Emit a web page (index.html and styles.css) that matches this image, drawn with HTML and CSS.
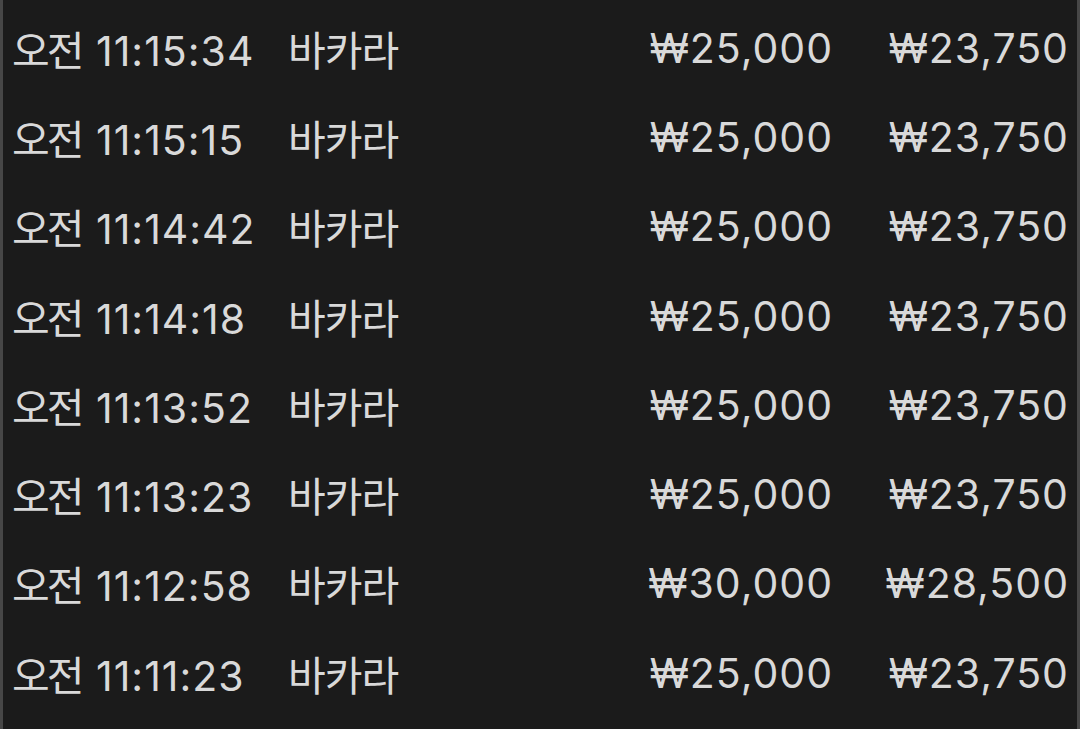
FILE: index.html
```html
<!DOCTYPE html>
<html lang="ko">
<head>
    <meta charset="UTF-8">
    <meta name="viewport" content="width=device-width, initial-scale=1.0">
    <title>게임 내역</title>
    <link rel="stylesheet" href="styles.css">
</head>
<body>

    <!-- Game history list -->
    <div class="history">
        <div class="row"><span class="time"><span class="ampm">오전</span> 11:15:34</span><span class="game">바카라</span><span class="bet">₩25,000</span><span class="win">₩23,750</span></div>
        <div class="row"><span class="time"><span class="ampm">오전</span> 11:15:15</span><span class="game">바카라</span><span class="bet">₩25,000</span><span class="win">₩23,750</span></div>
        <div class="row"><span class="time"><span class="ampm">오전</span> 11:14:42</span><span class="game">바카라</span><span class="bet">₩25,000</span><span class="win">₩23,750</span></div>
        <div class="row"><span class="time"><span class="ampm">오전</span> 11:14:18</span><span class="game">바카라</span><span class="bet">₩25,000</span><span class="win">₩23,750</span></div>
        <div class="row"><span class="time"><span class="ampm">오전</span> 11:13:52</span><span class="game">바카라</span><span class="bet">₩25,000</span><span class="win">₩23,750</span></div>
        <div class="row"><span class="time"><span class="ampm">오전</span> 11:13:23</span><span class="game">바카라</span><span class="bet">₩25,000</span><span class="win">₩23,750</span></div>
        <div class="row"><span class="time"><span class="ampm">오전</span> 11:12:58</span><span class="game">바카라</span><span class="bet">₩30,000</span><span class="win">₩28,500</span></div>
        <div class="row"><span class="time"><span class="ampm">오전</span> 11:11:23</span><span class="game">바카라</span><span class="bet">₩25,000</span><span class="win">₩23,750</span></div>
    </div>

</body>
</html>
```

FILE: styles.css
```css
/* Full page dark background */
body {
    margin: 0;
    height: 100vh;
    background-color: #1b1b1b;
    font-family: Inter, "Noto Sans CJK KR", sans-serif;
    color: #d9d9d9;
    overflow: hidden;
}

/* List with thin side borders */
.history {
    height: 100%;
    box-sizing: border-box;
    border-left: 3px solid #474747;
    border-right: 3px solid #474747;
    padding: 3px 8px 0 9px;
}

.row {
    display: grid;
    grid-template-columns: 276px 1fr 236px 236px;
    align-items: center;
    height: 89.3px;
    font-size: 41px;
}

.time,
.bet,
.win {
    letter-spacing: 1px;
}

.time {
    word-spacing: 2px;
}

/* Korean text is set a little tighter */
.ampm {
    letter-spacing: -3px;
}

.game {
    letter-spacing: -1px;
}

.bet,
.win {
    text-align: right;
}
```
